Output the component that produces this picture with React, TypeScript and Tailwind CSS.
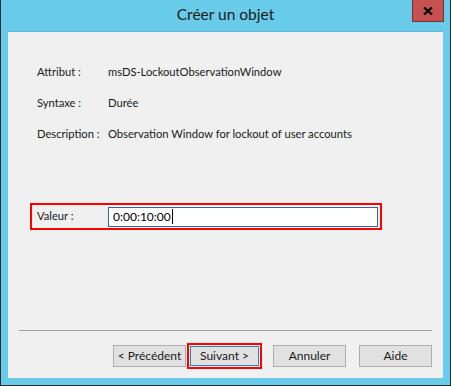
const font = { fontFamily: '"Segoe UI", Lato, "Noto Sans", sans-serif' };

const Button = ({ label }: { label: string }) => (
  <button className="w-[73px] h-[22px] bg-[#e1e1e1] border border-[#adadad] text-[12px] text-[#1a1a1a] leading-none">
    {label}
  </button>
);

const App = () => {
  return (
    <div
      className="w-[451px] h-[386px] bg-[#68cbea] border-x border-b border-[#2b2b2b] flex flex-col relative"
      style={font}
    >
      {/* Title bar */}
      <div className="h-[31px] flex items-center justify-center text-[15.5px] text-[#1a1a1a] pb-[2px]">
        Créer un objet
      </div>
      <button className="absolute top-0 right-[6px] w-[32px] h-[22px] bg-[#c75050] border border-[#7a3030] border-t-0 flex items-center justify-center">
        <svg width="10" height="8" viewBox="0 0 10 8">
          <path d="M1 0.5 L9 7.5 M9 0.5 L1 7.5" stroke="#000" strokeWidth="2.2" />
        </svg>
      </button>

      {/* Client area */}
      <div className="mx-[7px] h-[347px] bg-[#f0f0f0] border-t border-[#5fb4d6] flex flex-col text-[11.2px] text-[#1a1a1a]">
        <div className="pl-[29px] pt-[32px] flex flex-col gap-[15px]">
          <div className="flex h-[16px] items-center">
            <span className="w-[71px]">Attribut :</span>
            <span>msDS-LockoutObservationWindow</span>
          </div>
          <div className="flex h-[16px] items-center">
            <span className="w-[71px]">Syntaxe :</span>
            <span>Durée</span>
          </div>
          <div className="flex h-[16px] items-center">
            <span className="w-[71px]">Description :</span>
            <span>Observation Window for lockout of user accounts</span>
          </div>
        </div>

        <div className="ml-[22px] mt-[61px] w-[352px] h-[27px] border-2 border-[#ff0000] flex items-center pl-[5px]">
          <span className="w-[71px]">Valeur :</span>
          <div className="w-[270px] h-[20px] bg-white border border-[#2f6a9c] flex items-center pl-[4px] text-[#000] text-[12px]">
            0:00:10:00
            <span className="w-px h-[15px] bg-black ml-px" />
          </div>
        </div>

        <div className="mt-auto mx-[11px] h-px bg-[#a0a0a0]" />
        <div className="flex justify-end items-center pr-[11px] pt-[12px] pb-[9px]">
          <Button label="< Précédent" />
          <div className="ml-px border-2 border-[#ff0000] p-px">
            <button className="w-[69px] h-[20px] bg-[#e1e1e1] border border-[#3c7fb1] text-[12px] text-[#1a1a1a] leading-none">
              Suivant &gt;
            </button>
          </div>
          <div className="ml-[11px]">
            <Button label="Annuler" />
          </div>
          <div className="ml-[13px]">
            <Button label="Aide" />
          </div>
        </div>
      </div>
    </div>
  );
};

export default App;
